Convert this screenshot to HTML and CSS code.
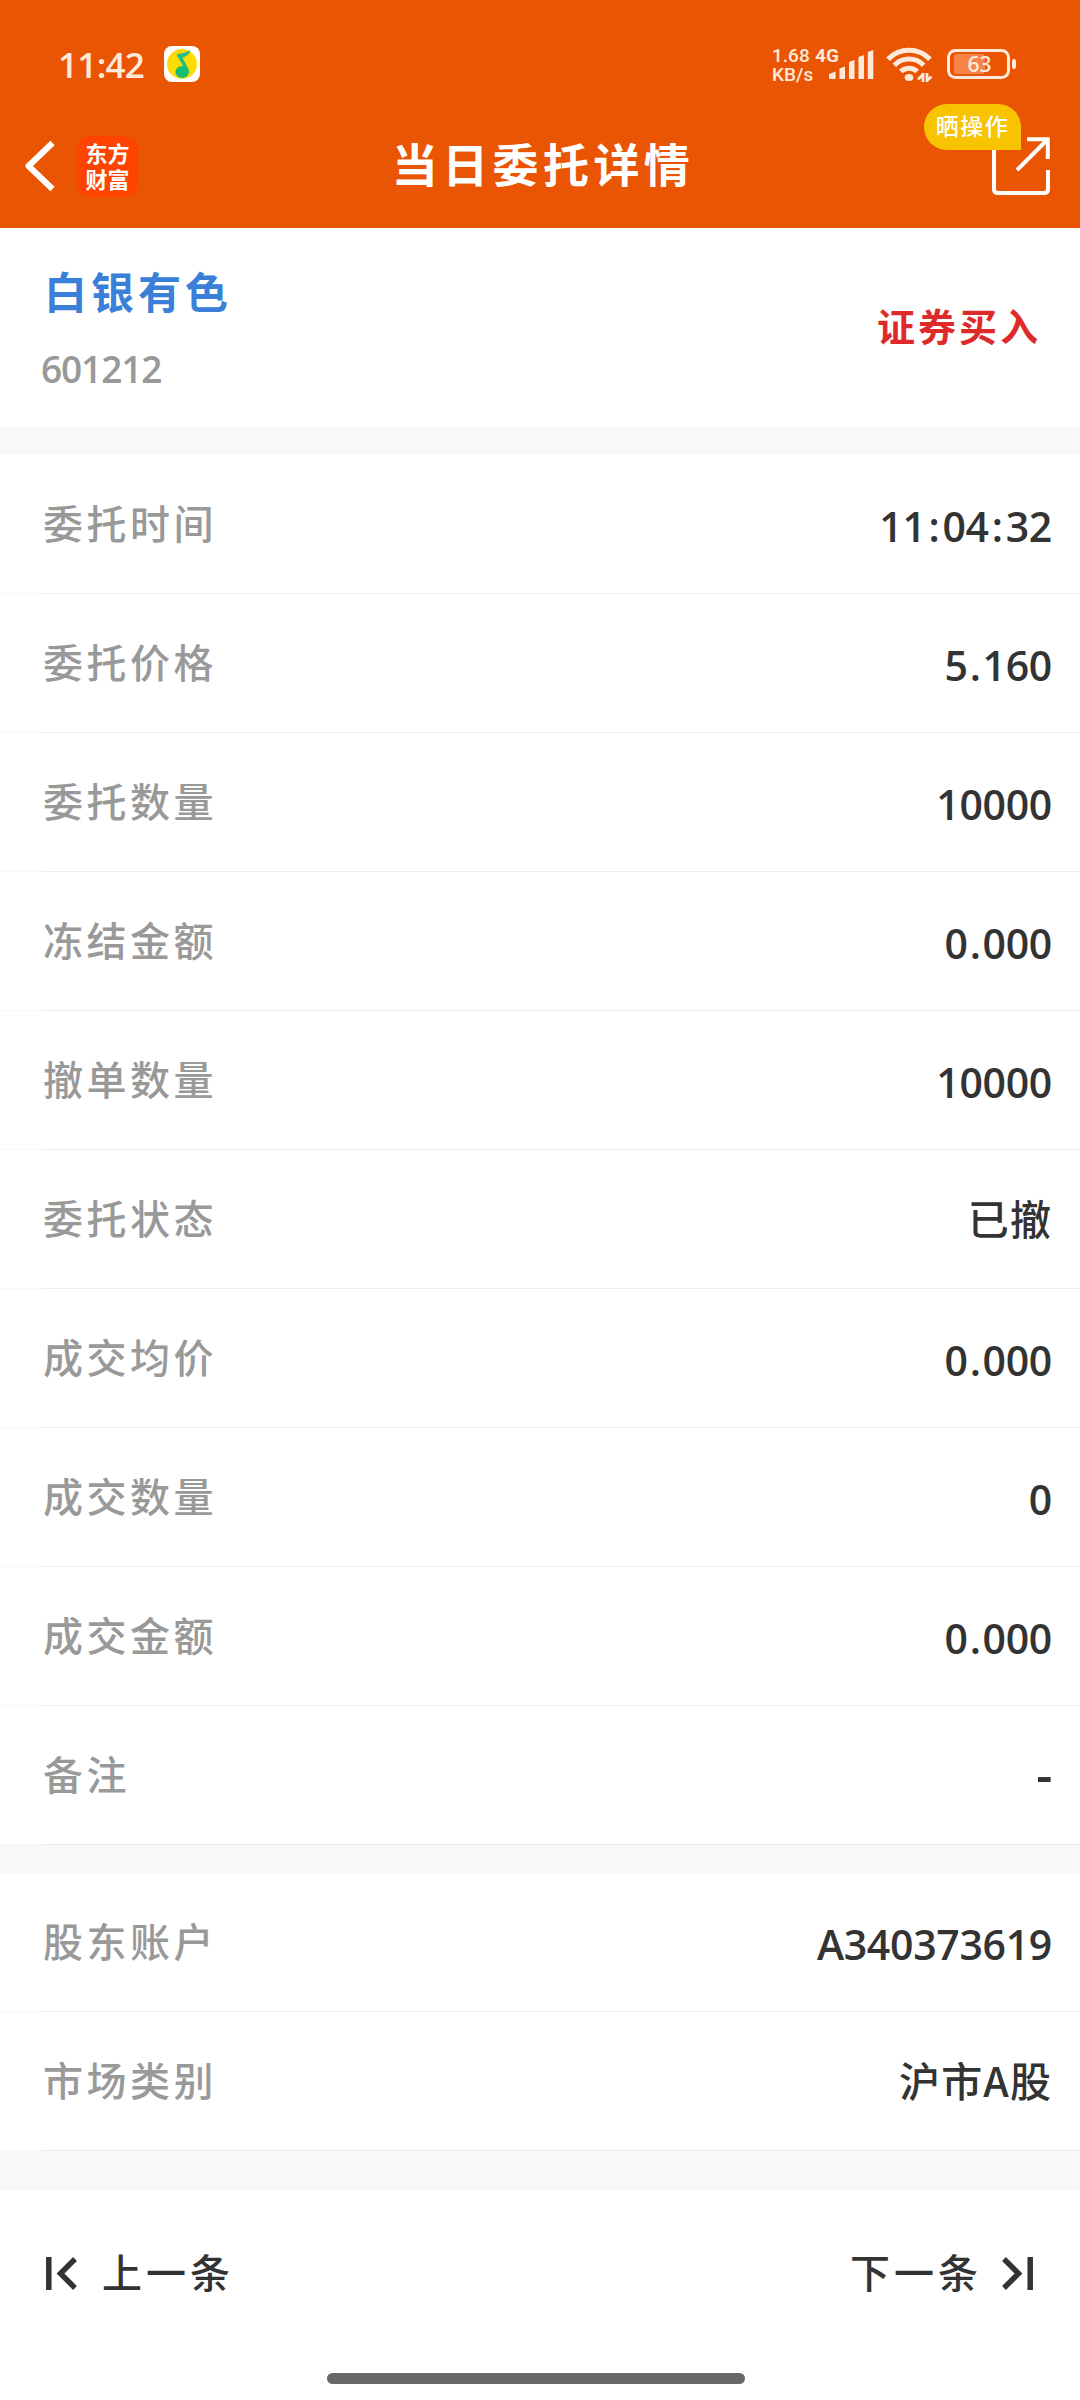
FILE: index.html
```html
<!DOCTYPE html>
<html lang="zh-CN">
<head>
<meta charset="UTF-8" />
<meta name="viewport" content="width=device-width, initial-scale=1" />
<title>当日委托详情</title>
<link rel="stylesheet" href="styles.css">
</head>
<body>
  <header class="header">
    <div class="status-bar">
      <span class="clock">11<span class="colon">:</span>42</span>
      <svg class="music-icon" viewBox="0 0 36 36">
        <rect width="36" height="36" rx="8" fill="#fff" />
        <circle cx="18" cy="18" r="15" fill="#ffdc00" />
        <path d="M12.500 8.500C17 7.500 22 6.800 26.500 4C25.500 8 22.500 10.500 18.500 11.500L25 24L22.500 26Z" fill="#22bd8b" />
        <ellipse cx="18.200" cy="26" rx="6.800" ry="6" fill="#16bd72" />
      </svg>
      <div class="status-right">
        <div class="speed"><span>1.68</span><span>KB/s</span></div>
        <svg class="signal-icon" viewBox="0 0 58 36" fill="#ffe9db">
          <text class="net-type" x="-1" y="15.500">4G</text>
          <path d="M13 28L19.500 25.500V33H14Q13 33 13 32Z" />
          <path d="M23.500 22.500L29 20.500V33H23.500Z" />
          <path d="M33 16L38.500 14V33H33Z" />
          <path d="M42.500 11L48 9V33H42.500Z" />
          <path d="M51.800 6L57.300 4V33H51.800Z" />
        </svg>
        <svg class="wifi-icon" viewBox="0 0 48 36" fill="none" stroke="#ffe9db" stroke-width="5">
          <path d="M3 13.200A29 29 0 0 1 45 13.200" />
          <path d="M9.300 19.200A20.500 20.500 0 0 1 38.700 19.200" />
          <path d="M15.800 25.500A12 12 0 0 1 32.200 25.500" />
          <ellipse cx="24" cy="31.500" rx="4.300" ry="3.500" fill="#ffe9db" stroke="none" />
          <path d="M38 27V36M33 33.500L38 28.500M42 36V27M42 34.500L46.500 30.500" stroke-width="2.800" />
        </svg>
        <svg class="battery-icon" viewBox="0 0 70 32">
          <rect x="7" y="6" width="31" height="20" rx="3" fill="#f58446" />
          <rect x="1.500" y="2.500" width="60" height="27" rx="7" fill="none" stroke="#ffe9db" stroke-width="3" />
          <rect x="65" y="11" width="4" height="10" rx="2" fill="#ffe9db" />
          <text class="battery-text" x="32.500" y="24" text-anchor="middle">63</text>
        </svg>
      </div>
    </div>

    <nav class="nav-bar">
      <div class="nav-left">
        <svg class="back-icon" viewBox="0 0 30 50" fill="none" stroke="#fff" stroke-width="6" stroke-linejoin="round">
          <path d="M27.500 2L3.500 25L27.500 48" />
        </svg>
        <div class="logo">东方<br>财富</div>
      </div>
      <h1 class="title">当日委托详情</h1>
      <div class="share">
        <svg class="share-icon" viewBox="0 0 58 58" fill="none" stroke="#fff" stroke-width="4">
          <path d="M2 6V52Q2 56 6 56H52Q56 56 56 52V33M35 2.200H55.800V22M54.500 3.500L25 33" />
        </svg>
        <span class="badge">晒操作</span>
      </div>
    </nav>
  </header>

  <main>
    <section class="stock">
      <div class="stock-info">
        <div class="stock-name">白银有色</div>
        <div class="stock-code">601212</div>
      </div>
      <div class="direction">证券买入</div>
    </section>

    <section class="list">
      <div class="item"><span class="label">委托时间</span><span class="value">11<span class="colon">:</span>04<span class="colon">:</span>32</span></div>
      <div class="item"><span class="label">委托价格</span><span class="value">5<span class="dot">.</span>160</span></div>
      <div class="item"><span class="label">委托数量</span><span class="value">10000</span></div>
      <div class="item"><span class="label">冻结金额</span><span class="value">0<span class="dot">.</span>000</span></div>
      <div class="item"><span class="label">撤单数量</span><span class="value">10000</span></div>
      <div class="item"><span class="label">委托状态</span><span class="value text">已撤</span></div>
      <div class="item"><span class="label">成交均价</span><span class="value">0<span class="dot">.</span>000</span></div>
      <div class="item"><span class="label">成交数量</span><span class="value">0</span></div>
      <div class="item"><span class="label">成交金额</span><span class="value">0<span class="dot">.</span>000</span></div>
      <div class="item"><span class="label">备注</span><span class="value empty">-</span></div>
    </section>

    <section class="list">
      <div class="item"><span class="label">股东账户</span><span class="value">A340373619</span></div>
      <div class="item"><span class="label">市场类别</span><span class="value text">沪市A股</span></div>
    </section>
  </main>

  <footer class="footer">
    <div class="pager">
      <a class="pager-btn">
        <svg class="pager-icon" viewBox="0 0 31 33" fill="none" stroke="#333" stroke-width="5.500">
          <path d="M2.800 0V33M29 2L14.500 16.500L29 31" />
        </svg>
        <span class="pager-text">上一条</span>
      </a>
      <a class="pager-btn next">
        <span class="pager-text">下一条</span>
        <svg class="pager-icon" viewBox="0 0 31 33" fill="none" stroke="#333" stroke-width="5.500">
          <path d="M28.200 0V33M2 2L16.500 16.500L2 31" />
        </svg>
      </a>
    </div>
    <div class="home-bar"></div>
  </footer>
</body>
</html>
```
FILE: styles.css
```css
* {
  box-sizing: border-box;
}
body {
  margin: 0;
  height: 2400px;
  display: flex;
  flex-direction: column;
  background-color: #f6f8fa;
  color: #333;
  font-family: 'Open Sans', 'Noto Sans CJK SC', sans-serif;
}
svg {
  display: block;
  flex: none;
  overflow: visible;
}

/* header */
.header {
  height: 228px;
  background-color: #ea5504;
  color: #fff;
}
.status-bar {
  height: 104px;
  padding: 24px 63px 0 58px;
  display: flex;
  align-items: center;
}
.clock {
  width: 106px;
  padding-top: 2px;
  font-size: 35px;
  font-weight: 600;
  line-height: 40px;
  letter-spacing: -0.7px;
  color: #ffe9db;
}
.music-icon {
  width: 36px;
  height: 36px;
}
.status-right {
  margin-left: auto;
  display: flex;
  align-items: center;
}
.speed {
  width: 44px;
  padding-top: 2px;
  display: flex;
  flex-direction: column;
  font-family: Roboto, sans-serif;
  font-size: 19px;
  font-weight: 500;
  line-height: 19px;
  color: #ffe9db;
}
.signal-icon {
  width: 58px;
  height: 36px;
  margin-right: 11px;
}
.net-type {
  font-family: Roboto, sans-serif;
  font-size: 19px;
  font-weight: 700;
}
.wifi-icon {
  width: 48px;
  height: 36px;
  margin-right: 14px;
}
.battery-icon {
  width: 70px;
  height: 32px;
}
.battery-text {
  font-size: 21px;
  font-weight: 600;
  fill: #ffe9db;
}
.nav-bar {
  height: 124px;
  padding: 0 30px 0 25px;
  display: grid;
  grid-template-columns: 1fr auto 1fr;
  align-items: center;
}
.nav-left {
  display: flex;
  align-items: center;
  gap: 22px;
}
.back-icon {
  width: 30px;
  height: 50px;
}
.logo {
  width: 61px;
  height: 61px;
  padding-top: 3px;
  border-radius: 14px;
  background-color: #ff4300;
  font-family: 'Noto Sans CJK SC', sans-serif;
  font-size: 22px;
  font-weight: 700;
  line-height: 26px;
  text-align: center;
}
.title {
  margin: 0 0 4px;
  padding-left: 11px;
  font-size: 46px;
  font-weight: 600;
  line-height: 60px;
  letter-spacing: 4.4px;
}
.share {
  position: relative;
  justify-self: end;
}
.share-icon {
  width: 58px;
  height: 58px;
}
.badge {
  position: absolute;
  right: 29px;
  bottom: 45px;
  width: 97px;
  height: 46px;
  border-radius: 23px 23px 0 23px;
  background-color: #f8c301;
  font-size: 23px;
  font-weight: 500;
  line-height: 45px;
  letter-spacing: 1.5px;
  text-align: center;
  white-space: nowrap;
}

/* stock */
.stock {
  height: 199px;
  padding: 7px 39px 0 41px;
  display: flex;
  justify-content: space-between;
  align-items: center;
  background-color: #fff;
}
.stock-name {
  padding-left: 3px;
  font-size: 43px;
  font-weight: 600;
  line-height: 60px;
  letter-spacing: 4px;
  color: #3a80d9;
}
.stock-code {
  margin-top: 16px;
  font-size: 37px;
  font-weight: 600;
  line-height: 60px;
  letter-spacing: -1.1px;
  color: #999;
}
.direction {
  padding-bottom: 13px;
  font-size: 38px;
  font-weight: 600;
  letter-spacing: 3px;
  color: #df2a2c;
}

/* detail rows */
.list {
  margin-top: 28px;
  background-color: #fff;
}
.item {
  height: 139px;
  padding: 2px 28px 0 43px;
  display: flex;
  justify-content: space-between;
  align-items: center;
  background:
    linear-gradient(#ececec, #ececec) 41px 100% / 100% 1px no-repeat,
    linear-gradient(#f6f8fa, #f6f8fa) 0 100% / 100% 1px no-repeat;
}
.label {
  padding-bottom: 7px;
  font-size: 40px;
  font-weight: 500;
  letter-spacing: 3.5px;
  color: #999;
}
.value {
  font-size: 41px;
  font-weight: 600;
  letter-spacing: -0.3px;
}
.value .colon {
  padding: 0 3px;
}
.value .dot {
  padding: 0 2px;
}
.value.text {
  padding-bottom: 7px;
  font-family: 'Noto Sans CJK SC', sans-serif;
  font-weight: 500;
  letter-spacing: 1.1px;
}
.value.empty {
  padding-bottom: 6px;
  font-size: 50px;
}

/* footer */
.footer {
  flex: 1;
  margin-top: 40px;
  display: flex;
  flex-direction: column;
  align-items: center;
  background-color: #fff;
}
.pager {
  width: 100%;
  height: 164px;
  padding: 0 47px 0 46px;
  display: flex;
  justify-content: space-between;
  align-items: center;
}
.pager-btn {
  display: flex;
  align-items: center;
  gap: 25px;
}
.pager-btn.next {
  gap: 20px;
}
.pager-text {
  padding-bottom: 4px;
  font-size: 40px;
  font-weight: 500;
  letter-spacing: 4px;
}
.pager-icon {
  width: 31px;
  height: 33px;
}
.home-bar {
  width: 418px;
  height: 11px;
  margin: 18px 8px 0 0;
  border-radius: 6px;
  background-color: #696969;
}
```
